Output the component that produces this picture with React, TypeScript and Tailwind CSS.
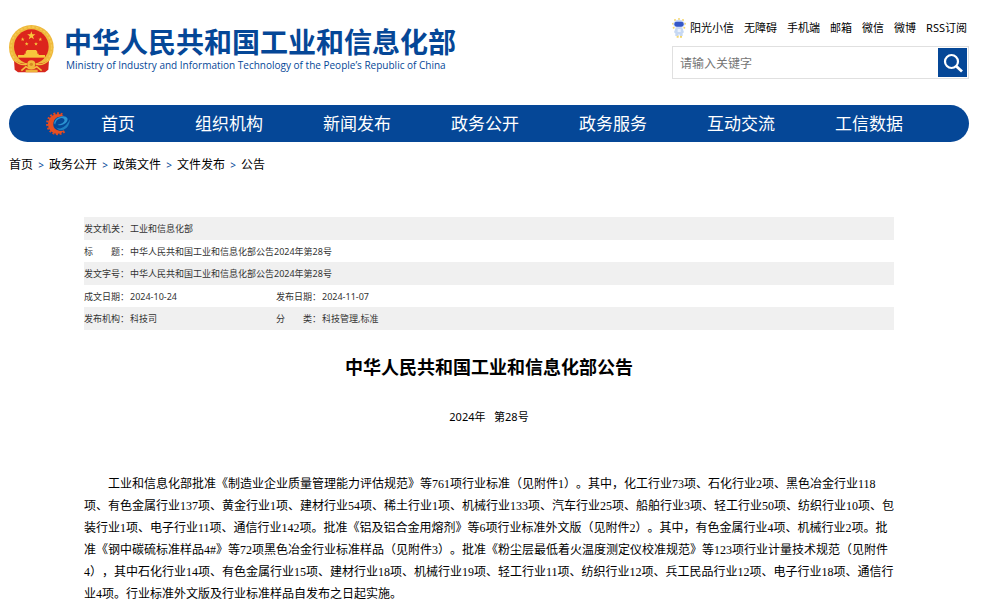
const NAV_LINKS = ['首页', '组织机构', '新闻发布', '政务公开', '政务服务', '互动交流', '工信数据'];
const TOP_LINKS = ['阳光小信', '无障碍', '手机端', '邮箱', '微信', '微博', 'RSS订阅'];
const CRUMBS = ['首页', '政务公开', '政策文件', '文件发布', '公告'];

const PARAGRAPH =
  '工业和信息化部批准《制造业企业质量管理能力评估规范》等761项行业标准（见附件1）。其中，化工行业73项、石化行业2项、黑色冶金行业118项、有色金属行业137项、黄金行业1项、建材行业54项、稀土行业1项、机械行业133项、汽车行业25项、船舶行业3项、轻工行业50项、纺织行业10项、包装行业1项、电子行业11项、通信行业142项。批准《铝及铝合金用熔剂》等6项行业标准外文版（见附件2）。其中，有色金属行业4项、机械行业2项。批准《钢中碳硫标准样品4#》等72项黑色冶金行业标准样品（见附件3）。批准《粉尘层最低着火温度测定仪校准规范》等123项行业计量技术规范（见附件4），其中石化行业14项、有色金属行业15项、建材行业18项、机械行业19项、轻工行业11项、纺织行业12项、兵工民品行业12项、电子行业18项、通信行业4项。行业标准外文版及行业标准样品自发布之日起实施。';

const STAR = 'M0-10 2.4-3.2 9.5-3.1 3.8 1.2 5.9 8.1 0 4-5.9 8.1-3.8 1.2-9.5-3.1-2.4-3.2Z';

function Emblem() {
  return (
    <svg viewBox="0 0 135 144" className="h-12 w-[45px] shrink-0" aria-hidden="true">
      <circle cx="67" cy="67" r="67" fill="#efb93c" />
      <circle cx="67" cy="67" r="61" fill="none" stroke="#f5cb55" strokeWidth="4" strokeDasharray="7 5" />
      <path d="M15 106 Q40 122 67 114 Q94 122 120 106 L118 134 L108 142 H27 L17 134Z" fill="#d7271d" />
      <circle cx="67" cy="65" r="52" fill="#dc241c" />
      <g fill="#f8c83c">
        <path d={STAR} transform="translate(67 32) scale(1.3)" />
        <path d={STAR} transform="translate(41 43) scale(.6)" />
        <path d={STAR} transform="translate(94 43) scale(.6)" />
        <path d={STAR} transform="translate(53 57) scale(.6)" />
        <path d={STAR} transform="translate(81 57) scale(.6)" />
        <path d="M50 80 L54 75 H81 L85 80 V88 H50Z" />
        <path d="M46 86 H89 V91 H46Z" />
        <path d="M27 90 H108 V98 H27Z" />
      </g>
      <g fill="none" stroke="#f3bd3d">
        <path d="M14 104 Q34 124 54 117 M121 104 Q101 124 81 117" strokeWidth="4" />
        <path d="M37 137 L51 125 Q67 137 83 125 L98 137" strokeWidth="5" />
      </g>
      <circle cx="67" cy="118" r="12" fill="#f1b83a" />
      <circle cx="67" cy="118" r="5" fill="#d78b24" />
      <path d="M50 134 H86 V142 H50Z" fill="#eeb23a" />
    </svg>
  );
}

function Mascot() {
  return (
    <svg viewBox="0 0 42 60" className="h-5 w-3.5 shrink-0" aria-hidden="true">
      <g fill="#f4d66b">
        <circle cx="9" cy="6" r="3" />
        <circle cx="21" cy="3" r="3" />
        <circle cx="33" cy="6" r="3" />
        <circle cx="3" cy="17" r="3" />
        <circle cx="39" cy="17" r="3" />
        <circle cx="5" cy="29" r="3" />
        <circle cx="37" cy="29" r="3" />
        <path d="M14 52h6v7h-6zM24 52h6v7h-6z" />
      </g>
      <ellipse cx="21" cy="18" rx="17" ry="13" fill="#cbd9f6" />
      <rect x="7" y="11" width="28" height="15" rx="7" fill="#3457c8" />
      <path d="M11 29h20l5 14-4 3v8h-8l-3-7-3 7h-8v-8l-4-3z" fill="#c6d8f3" />
      <path d="M17 33h9v9h-9z" fill="#eaf1fd" />
    </svg>
  );
}

function GearLogo() {
  return (
    <svg viewBox="0 0 74 74" className="h-6 w-6" aria-hidden="true">
      <path d="M57 60 A32 32 0 1 1 51 8" fill="none" stroke="#dc4a26" strokeWidth="7" strokeDasharray="6 5" />
      <path
        d="M55 12 Q42 3 27 8 Q6 16 6 38 Q7 60 28 66 Q46 70 57 56 Q44 61 32 55 Q20 47 23 32 Q27 17 42 15 Q49 12 55 12Z"
        fill="#e84f22"
      />
      <path
        d="M28 39 Q30 23 44 19 Q57 17 57 27 Q54 36 36 39 Q43 44 56 37 Q69 29 66 19 Q61 11 47 14 Q28 18 25 34Z"
        fill="#2b93d1"
      />
      <path d="M31 45 Q34 53 46 50 Q63 44 74 22 Q72 47 54 55 Q37 60 31 45Z" fill="#1f7fc2" />
    </svg>
  );
}

function SearchBox() {
  return (
    <form
      className="flex items-center border border-[#e0e0e0] p-px"
      onSubmit={(e) => e.preventDefault()}
    >
      <input
        type="text"
        aria-label="请输入关键字"
        placeholder="请输入关键字"
        className="h-[29px] min-w-0 flex-1 px-1.5 pt-0.5 text-xs outline-none placeholder:text-[#757575]"
      />
      <button type="submit" aria-label="搜索" className="flex h-[29px] w-[29px] items-center justify-center bg-[#054797]">
        <svg viewBox="0 0 20 20" className="h-5 w-5" fill="none" stroke="#fff" aria-hidden="true">
          <circle cx="8.5" cy="8.5" r="6.5" strokeWidth="2.2" />
          <path d="M13 13l6 5.5" strokeWidth="2.8" />
        </svg>
      </button>
    </form>
  );
}

// Two-character labels are padded out with full-width spaces to line up with the rest
function InfoTable() {
  return (
    <table className="w-full table-fixed border-collapse text-left text-[9px] leading-none text-[#333] [&_th]:p-0 [&_th]:font-normal [&_td]:p-0">
      <colgroup>
        <col className="w-[46px]" />
        <col className="w-[146px]" />
        <col className="w-[46px]" />
        <col />
      </colgroup>
      <tbody>
        <tr className="h-[23px] bg-[#f0f0f0]">
          <th scope="row">发文机关：</th>
          <td colSpan={3}>工业和信息化部</td>
        </tr>
        <tr className="h-[22px]">
          <th scope="row">标　　题：</th>
          <td colSpan={3}>中华人民共和国工业和信息化部公告2024年第28号</td>
        </tr>
        <tr className="h-[23px] bg-[#f0f0f0]">
          <th scope="row">发文字号：</th>
          <td colSpan={3}>中华人民共和国工业和信息化部公告2024年第28号</td>
        </tr>
        <tr className="h-[22px]">
          <th scope="row">成文日期：</th>
          <td>2024-10-24</td>
          <th scope="row">发布日期：</th>
          <td>2024-11-07</td>
        </tr>
        <tr className="h-[23px] bg-[#f0f0f0]">
          <th scope="row">发布机构：</th>
          <td>科技司</td>
          <th scope="row">分　　类：</th>
          <td>科技管理,标准</td>
        </tr>
      </tbody>
    </table>
  );
}

export default function App() {
  return (
    <div
      lang="zh-CN"
      className="bg-white pr-[13px] pl-[9px] font-['Noto_Sans','Noto_Sans_CJK_SC',sans-serif] text-black [text-spacing-trim:space-all]"
    >
      <header className="flex items-start justify-between pt-[18px]">
        <a href="#" className="flex items-center gap-2.5 pt-[7px] text-[#054797]">
          <Emblem />
          <span className="flex flex-col pt-1">
            <span className="font-['Liberation_Sans','Noto_Sans_CJK_SC',sans-serif] text-[28px] leading-7 font-bold whitespace-nowrap">
              中华人民共和国工业和信息化部
            </span>
            <span className="pl-0.5 font-['Open_Sans',sans-serif] text-[10px] leading-[14px] font-medium whitespace-nowrap">
              Ministry of Industry and Information Technology of the People’s Republic of China
            </span>
          </span>
        </a>
        <div className="flex flex-col gap-2">
          <nav className="flex items-center justify-end gap-2.5 pr-0.5 text-[11px] leading-5 whitespace-nowrap">
            {TOP_LINKS.map((label, index) => (
              <a key={label} href="#" className="flex items-center gap-1">
                {index === 0 && <Mascot />}
                {label}
              </a>
            ))}
          </nav>
          <SearchBox />
        </div>
      </header>

      <nav className="mt-[26px] flex h-[37px] items-center rounded-full bg-[#054797] pl-[37px] text-[17px] whitespace-nowrap text-white">
        <GearLogo />
        <ul className="flex gap-[60px] pl-[31px]">
          {NAV_LINKS.map((label) => (
            <li key={label}>
              <a href="#">{label}</a>
            </li>
          ))}
        </ul>
      </nav>

      <nav className="mt-[13px] flex text-xs leading-5">
        {CRUMBS.map((label, index) => (
          <span key={label} className="flex">
            {index > 0 && <span className="w-4 text-center text-[10px] text-[#054797]">&gt;</span>}
            <a href="#">{label}</a>
          </span>
        ))}
      </nav>

      <main className="mx-[75px] pt-[42px]">
        <InfoTable />
        <h1 className="mt-[23px] text-center text-lg leading-7 font-bold">中华人民共和国工业和信息化部公告</h1>
        <p className="mt-[26px] text-center text-[11px] leading-5">2024年&nbsp;&nbsp;&nbsp;第28号</p>
        <p className="mt-[46px] indent-6 font-['Liberation_Serif','Noto_Sans_CJK_SC',serif] text-xs leading-[22px]">
          {PARAGRAPH}
        </p>
      </main>
    </div>
  );
}
